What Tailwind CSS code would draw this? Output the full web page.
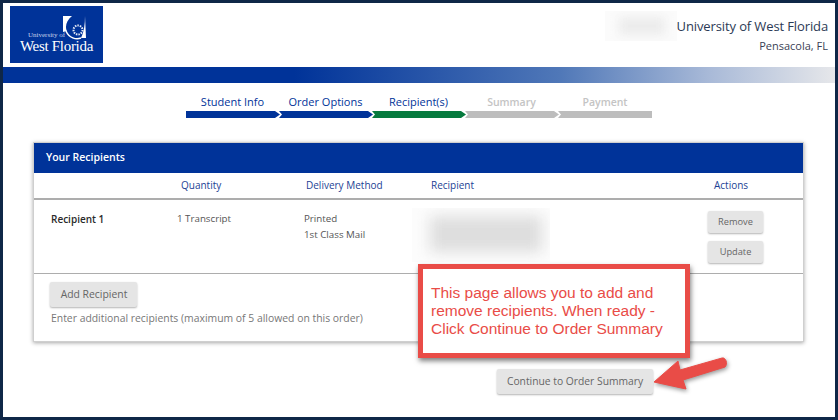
<!DOCTYPE html>
<html lang="en">
  <head>
    <meta charset="UTF-8" />
    <title>Your Recipients</title>
    <script src="https://cdn.jsdelivr.net/npm/@tailwindcss/browser@4"></script>
  </head>
  <body class="bg-[#0f2747] font-['Open_Sans',sans-serif]">
    <div class="relative m-[3px] mb-0 h-[414px] w-[832px] overflow-hidden bg-white">
      <!-- header -->
      <div class="flex h-[64px] items-start justify-between">
        <div class="ml-[7px] mt-[3px] h-[57px] w-[93px] bg-[#003399] pt-[10px] text-white">
          <div class="flex items-end pl-[18px]">
            <div class="w-[35px] whitespace-nowrap pb-[1px] font-['Liberation_Serif',serif] text-[7px] leading-[7px] text-[#c6d2ea]">University of</div>
            <svg width="24" height="24" viewBox="0 0 24 24">
              <path d="M0 0h9C5 3 3 7 3 11c0 2 .5 3 1 4l-4 1z" fill="#fff" />
              <path d="M22 0l1 22h-5c3-6 4-14 4-22z" fill="#fff" />
              <circle cx="15" cy="14" r="4.500" fill="none" stroke="#e3e9f6" stroke-width="2" stroke-dasharray="1.500 1" />
              <path d="M3 15c3 7 10 9 15 7" fill="none" stroke="#fff" stroke-width="1.500" />
            </svg>
          </div>
          <div class="mt-[-1px] text-center font-['Liberation_Serif',serif] text-[15px] leading-[14px] tracking-[-0.3px]">West Florida</div>
        </div>
        <div class="mr-[7px] mt-[8px] flex flex-col items-end">
          <div class="flex items-center">
            <div class="h-[30px] w-[72px] overflow-hidden bg-[#fbfbfb]">
              <div class="ml-[14px] mt-[6px] h-[18px] w-[46px] bg-[#ececec] blur-[5px]"></div>
            </div>
            <div class="text-[13px] leading-[20px] tracking-[-0.12px] text-[#2b3a55]">University of West Florida</div>
          </div>
          <div class="mt-[-3px] text-[11px] leading-[16px] text-[#3a3f55]">Pensacola, FL</div>
        </div>
      </div>
      <div class="h-[16px] bg-[linear-gradient(90deg,#003399_0%,#003399_35%,#5078b8_67%,#a9bad8_85%,#e6e7ea_100%)]"></div>

      <!-- steps -->
      <div class="ml-[183px] mt-[12px] flex w-[466px] text-[11px] font-medium leading-[14px]">
        <div class="w-[93px]">
          <div class="h-[14px] text-center text-[#003399]">Student Info</div>
          <svg class="mt-[2px] block" width="94" height="7" viewBox="0 0 94 7"><path d="M0 0h89l5 3.500-5 3.500H0z" fill="#003399" /></svg>
        </div>
        <div class="w-[93px]">
          <div class="h-[14px] text-center text-[#003399]">Order Options</div>
          <svg class="mt-[2px] block" width="94" height="7" viewBox="0 0 94 7"><path d="M0 0h89l5 3.500-5 3.500H0l3-3.500z" fill="#003399" /></svg>
        </div>
        <div class="w-[93px]">
          <div class="h-[14px] text-center text-[#003399]">Recipient(s)</div>
          <svg class="mt-[2px] block" width="94" height="7" viewBox="0 0 94 7"><path d="M0 0h89l5 3.500-5 3.500H0l3-3.500z" fill="#067a3e" /></svg>
        </div>
        <div class="w-[93px]">
          <div class="h-[14px] text-center text-[10.5px] font-semibold text-[#c4c4c4]">Summary</div>
          <svg class="mt-[2px] block" width="94" height="7" viewBox="0 0 94 7"><path d="M0 0h89l5 3.500-5 3.500H0l3-3.500z" fill="#bdbdbd" /></svg>
        </div>
        <div class="w-[94px]">
          <div class="h-[14px] text-center text-[10.5px] font-semibold text-[#c4c4c4]">Payment</div>
          <svg class="mt-[2px] block" width="94" height="7" viewBox="0 0 94 7"><path d="M0 0h94v7H0l3-3.500z" fill="#bdbdbd" /></svg>
        </div>
      </div>

      <!-- card -->
      <div class="ml-[30px] mt-[24px] h-[200px] w-[771px] border border-[#cfcfcf] bg-white shadow-[0_1px_4px_rgba(0,0,0,0.35)]">
        <div class="flex h-[30px] items-center bg-[#003399] pl-[12px] text-[10.5px] font-semibold text-white">Your Recipients</div>
        <div class="flex h-[27px] items-center border-b-2 border-[#adadad] text-[10px] font-medium text-[#1c3f94]">
          <div class="w-[147px]"></div>
          <div class="w-[125px]">Quantity</div>
          <div class="w-[125px]">Delivery Method</div>
          <div class="w-[283px]">Recipient</div>
          <div>Actions</div>
        </div>
        <div class="flex h-[74px] border-b border-[#adadad] text-[9.75px] leading-[16px] text-[#555]">
          <div class="w-[143px] pl-[17px] pt-[11px] text-[10px] font-semibold text-[#2a2a2a]">Recipient 1</div>
          <div class="w-[127px] pt-[11px]">1 Transcript</div>
          <div class="w-[108px] pt-[11px]">Printed<br />1st Class Mail</div>
          <div class="w-[138px] pt-[8px]">
            <div class="h-[54px] w-[138px] overflow-hidden bg-[#fcfcfc]">
              <div class="ml-[18px] mt-[8px] h-[36px] w-[112px] bg-[#dedede] blur-[7px]"></div>
            </div>
          </div>
          <div class="ml-[158px] flex flex-col gap-[8px] pt-[11px] text-[9.25px]">
            <div class="flex h-[22px] w-[55px] items-center justify-center rounded-[2px] bg-[#e5e5e5] text-[#666] shadow-[0_1px_2px_rgba(0,0,0,0.3)]">Remove</div>
            <div class="flex h-[22px] w-[55px] items-center justify-center rounded-[2px] bg-[#e5e5e5] text-[#666] shadow-[0_1px_2px_rgba(0,0,0,0.3)]">Update</div>
          </div>
        </div>
        <div class="pl-[16px] pt-[8px] text-[10.4px]">
          <div class="flex h-[25px] w-[87px] items-center justify-center rounded-[2px] bg-[#e5e5e5] pl-[1px] text-[#666] shadow-[0_1px_2px_rgba(0,0,0,0.3)]">Add Recipient</div>
          <div class="mt-[3px] pl-[1px] leading-[16px] text-[#777]">Enter additional recipients (maximum of 5 allowed on this order)</div>
        </div>
      </div>

      <div class="ml-[494px] mt-[27px] flex h-[25px] w-[156px] items-center justify-center rounded-[2px] bg-[#e5e5e5] text-[10.3px] text-[#666] shadow-[0_1px_2px_rgba(0,0,0,0.3)]">Continue to Order Summary</div>

      <!-- annotation -->
      <div class="absolute left-[415px] top-[261px] flex h-[94px] w-[272px] items-center border-[5px] border-[#e94c47] bg-white pl-[8px] font-['Liberation_Sans',sans-serif] text-[15.5px] leading-[18px] text-[#e94c47] shadow-[1px_3px_5px_rgba(0,0,0,0.5)]">
        <div>This page allows you to add and<br />remove recipients. When ready -<br />Click Continue to Order Summary</div>
      </div>
      <svg class="absolute left-[650px] top-[352px]" width="80" height="40" viewBox="0 0 80 40">
        <path d="M1 27L25 6l2 9 42-12c4-1 6 6 3 9L30 25l3 9z" fill="#e94c47" stroke="#e94c47" stroke-width="1" stroke-linejoin="round" style="filter:drop-shadow(1px 2px 2px rgba(0,0,0,.4))" />
      </svg>
    </div>
  </body>
</html>
